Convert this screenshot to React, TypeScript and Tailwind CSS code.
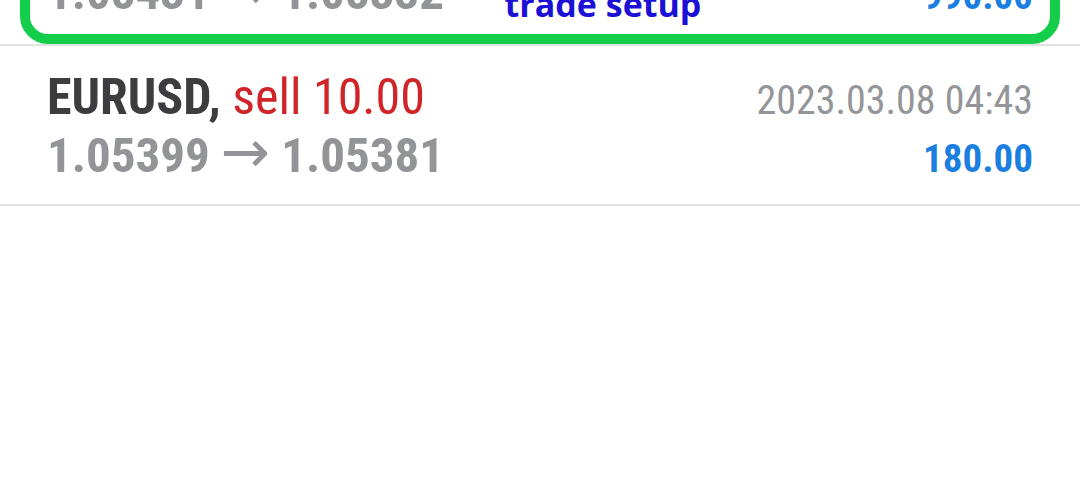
const font = { fontFamily: "Roboto, 'Liberation Sans', sans-serif" };

type Deal = {
  symbol: string;
  side: string;
  volume: string;
  open: string;
  close: string;
  time: string;
  profit: string;
};

function DealRow({
  deal,
  pad = "pt-[24px]",
  children,
}: {
  deal: Deal;
  pad?: string;
  children?: React.ReactNode;
}) {
  return (
    <div className={`relative h-[160px] border-b-2 border-[#e3e3e3] px-[47px] ${pad}`}>
      {children}
      <div className="relative flex items-baseline justify-between leading-[54px]">
        <div className="text-[50px] font-stretch-condensed">
          <span className="font-bold text-[#3d3d3f]">{deal.symbol},</span>{" "}
          <span className="text-[#d02428]">
            {deal.side} {deal.volume}
          </span>
        </div>
        <div className="text-[40px] text-[#949599] font-stretch-condensed">{deal.time}</div>
      </div>
      <div className="relative flex items-baseline justify-between leading-[56px]">
        <div className="text-[49px] font-bold text-[#939498] font-stretch-condensed">
          {deal.open}
          <span
            className="mx-[11px] text-[59px] font-normal leading-[0px] font-stretch-normal"
            style={{ fontFamily: "'DejaVu Sans', sans-serif" }}
          >
            →
          </span>
          {deal.close}
        </div>
        <div className="text-[39px] font-bold text-[#1a7fe0] font-stretch-condensed">
          {deal.profit}
        </div>
      </div>
    </div>
  );
}

export default function App() {
  const deals: Deal[] = [
    {
      symbol: "EURUSD",
      side: "sell",
      volume: "10.00",
      open: "1.05431",
      close: "1.05332",
      time: "2023.03.08 03:12",
      profit: "990.00",
    },
    {
      symbol: "EURUSD",
      side: "sell",
      volume: "10.00",
      open: "1.05399",
      close: "1.05381",
      time: "2023.03.08 04:43",
      profit: "180.00",
    },
  ];

  return (
    <div className="h-[480px] w-[1080px] overflow-hidden bg-white" style={font}>
      <div className="-mt-[114px]">
        <DealRow deal={deals[0]} pad="pt-[21px]">
          {/* highlight drawn over the trade */}
          <div className="absolute bottom-[0px] left-[20px] right-[20px] top-[10px] rounded-[28px] border-[10px] border-[#14cd4a]" />
          <div
            className="absolute bottom-[23px] left-0 right-0 z-10 text-center text-[34px] font-bold leading-none text-[#1c10d6]"
            style={{ fontFamily: "'Open Sans', 'Noto Sans', sans-serif" }}
          >
            <span className="ml-[126px]">trade setup</span>
          </div>
        </DealRow>
        <DealRow deal={deals[1]} />
      </div>
    </div>
  );
}
